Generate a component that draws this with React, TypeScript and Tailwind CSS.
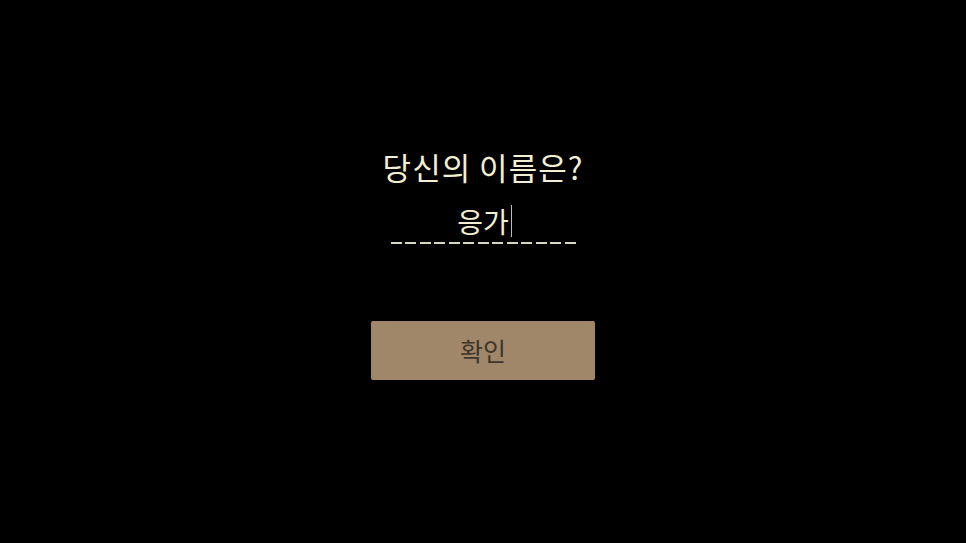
import React from 'react';

const font = { fontFamily: '"Noto Sans CJK KR", "Noto Sans", sans-serif' };

export default function App() {
  return (
    <div className="w-[966px] h-[543px] bg-black flex flex-col items-center" style={font}>
      {/* Title */}
      <div className="mt-[145px] h-[44px] text-[31px] leading-[44px] text-[#f3efd2] tracking-[1px]">당신의 이름은?</div>

      {/* Name input */}
      <div className="mt-[14px] flex flex-col items-center">
        <div className="relative h-[36px] w-[186px] flex justify-center">
          <span className="text-[28px] leading-[36px] text-[#f3efd2]">응가</span>
          <span className="absolute left-[121px] top-[2px] w-px h-[32px] bg-[#bdbdae]" />
        </div>
        <div className="mt-[3px] flex gap-[3.5px]">
          {Array.from({ length: 13 }).map((_, i) => (
            <span key={i} className="w-[11px] h-[2px] bg-[#d9d6bf]" />
          ))}
        </div>
      </div>

      {/* Confirm button */}
      <button className="mt-[77px] w-[224px] h-[59px] rounded-[2px] bg-[#a0876a] flex items-center justify-center">
        <span className="text-[25px] text-[#3f3528]">확인</span>
      </button>
    </div>
  );
}
